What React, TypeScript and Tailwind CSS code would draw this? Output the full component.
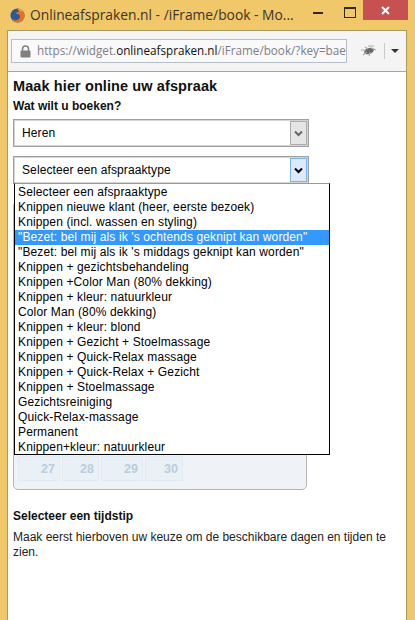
import React from "react";

const options = [
  "Selecteer een afspraaktype",
  "Knippen nieuwe klant (heer, eerste bezoek)",
  "Knippen (incl. wassen en styling)",
  "\"Bezet: bel mij als ik 's ochtends geknipt kan worden\"",
  "\"Bezet: bel mij als ik 's middags geknipt kan worden\"",
  "Knippen + gezichtsbehandeling",
  "Knippen +Color Man (80% dekking)",
  "Knippen + kleur: natuurkleur",
  "Color Man (80% dekking)",
  "Knippen + kleur: blond",
  "Knippen + Gezicht + Stoelmassage",
  "Knippen + Quick-Relax massage",
  "Knippen + Quick-Relax + Gezicht",
  "Knippen + Stoelmassage",
  "Gezichtsreiniging",
  "Quick-Relax-massage",
  "Permanent",
  "Knippen+kleur: natuurkleur",
];

const days = [
  { n: 27, w: "w-[42px]" },
  { n: 28, w: "w-[37px]" },
  { n: 29, w: "w-[42px]" },
  { n: 30, w: "w-[38px]" },
];

const Chevron = ({ color }: { color: string }) => (
  <svg width="9" height="7" viewBox="0 0 9 7">
    <path d="M1 1.500 L4.500 5 L8 1.500" fill="none" stroke={color} strokeWidth="2" />
  </svg>
);

const FakeSelect = ({ label, active }: { label: string; active?: boolean }) => (
  <div className="flex w-[296px] h-[28px] border border-[#a0a0a0] shadow-[inset_0_0_0_1px_#d4d4d4] bg-white p-px">
    <div className="flex-1 pl-[7px] text-[12px] tracking-[0.1px] leading-[24px] text-black">{label}</div>
    <div
      className={
        active
          ? "flex w-[17px] items-center justify-center border border-[#7eb4ea] bg-[#dcebfc]"
          : "flex w-[17px] items-center justify-center border border-[#acacac] bg-[#e5e5e5]"
      }
    >
      <Chevron color={active ? "#000000" : "#666666"} />
    </div>
  </div>
);

const App: React.FC = () => {
  return (
    <div className="w-[415px] h-[620px] overflow-hidden bg-[#f0c869] flex flex-col font-['Liberation_Sans',sans-serif]">
      {/* title bar */}
      <div className="flex h-[30px] shrink-0">
        <div className="flex items-center pl-[10px] gap-[5px] flex-1 pt-[1px]">
          <svg width="15" height="15" viewBox="0 0 16 16">
            <circle cx="8" cy="8" r="7.500" fill="#2b5a9c" />
            <path d="M8 .5A7.500 7.500 0 1 1 .9 10C2 12 4 13 6 13c3 0 5-2 4.600-4.600C10 6.500 8 6 6.500 6.500 6.800 5 8 4 9.500 3.800 9 2.500 8.500 1.500 8 .5Z" fill="#e8711c" />
            <path d="M8 .5c3 .3 5.500 2 6.700 4.500C13.500 3.500 12 3 10.500 3.200 9.800 2.300 9 1.300 8 .5Z" fill="#f6b12d" />
          </svg>
          <span className="font-['Open_Sans',sans-serif] text-[13.800px] text-[#3d3526] whitespace-nowrap">
            Onlineafspraken.nl - /iFrame/book - Mo...
          </span>
        </div>
        <div className="flex items-start">
          <div className="w-[10px] h-[2px] bg-[#2e2a1f] mt-[12px] mr-[21px]" />
          <div className="w-[10px] h-[8px] border border-t-2 border-[#2e2a1f] mt-[7px] mr-[7px] box-content" />
          <div className="w-[45px] h-[20px] bg-[#c75050] flex items-center justify-center mr-[7px]">
            <svg width="9" height="9" viewBox="0 0 9 9">
              <path d="M1 1 L8 8 M8 1 L1 8" stroke="#ffffff" strokeWidth="2" />
            </svg>
          </div>
        </div>
      </div>

      {/* window frame */}
      <div className="flex-1 ml-[7px] mr-[8px] border-x border-t border-[#a89a63] flex flex-col min-h-0">
        {/* url bar */}
        <div className="flex items-center h-[41px] shrink-0 bg-[#f4f4f4] border-b border-[#a6a6a6] pl-[3px]">
          <div className="flex items-center w-[336px] h-[24px] border border-[#b5bfcc] bg-[#f9f9f9] overflow-hidden pl-[8px]">
            <svg width="11" height="13" viewBox="0 0 11 13" className="shrink-0 mr-[6px]">
              <path d="M2.500 6V4a3 3 0 0 1 6 0v2" fill="none" stroke="#808080" strokeWidth="1.500" />
              <rect x="0.500" y="5.500" width="10" height="7" rx="1" fill="#808080" />
            </svg>
            <span className="font-['Open_Sans',sans-serif] text-[11.700px] text-[#7f7f86] whitespace-nowrap">
              https://widget.<span className="text-[#111111]">onlineafspraken.nl</span>/iFrame/book/?key=bae
            </span>
          </div>
          <svg width="17" height="14" viewBox="0 0 17 14" className="ml-[13px]">
            <ellipse cx="9" cy="7" rx="5" ry="3" fill="#666666" transform="rotate(-20 9 7)" />
            <path d="M1 6 L6 6 M3 11 L7 8 M9 12 L10 8 M8 2 L14 2 M11 4 L16 6 M5 3 L8 5" stroke="#aaaaaa" strokeWidth="1.200" />
          </svg>
          <div className="w-px h-[16px] bg-[#c9c9c9] ml-[7px]" />
          <div className="ml-[6px] w-0 h-0 border-x-[4px] border-x-transparent border-t-[4px] border-t-[#333333]" />
        </div>

        {/* page */}
        <div className="relative flex-1 bg-white pl-[5px] pr-[6px]">
          <h1 className="mt-[6px] text-[14.500px] tracking-[0.1px] leading-[16px] font-bold text-[#111111]">Maak hier online uw afspraak</h1>
          <div className="mt-[5px] text-[12px] leading-[14px] font-bold text-[#111111]">Wat wilt u boeken?</div>
          <div className="mt-[6px]">
            <FakeSelect label="Heren" />
          </div>
          <div className="mt-[9px]">
            <FakeSelect label="Selecteer een afspraaktype" active />
          </div>

          {/* calendar, mostly covered by the open list */}
          <div className="mt-[20px] w-[294px] h-[286px] flex flex-col justify-end rounded-b-[5px] border border-[#b5b5b5] bg-[#eff3f7] pl-[4px] pb-[8px]">
            <div className="flex gap-[2px]">
              {days.map((d) => (
                <div
                  key={d.n}
                  className={`${d.w} h-[25px] border border-[#e3ebf2] bg-[#e9f0f6] pr-[4px] text-right text-[12.500px] font-bold leading-[25px] text-[#b9cddf]`}
                >
                  {d.n}
                </div>
              ))}
            </div>
          </div>

          <div className="mt-[19px] text-[12px] leading-[14px] font-bold text-[#111111]">Selecteer een tijdstip</div>
          <p className="mt-[7px] text-[12px] leading-[15px] text-[#222222]">
            Maak eerst hierboven uw keuze om de beschikbare dagen en tijden te zien.
          </p>

          {/* open dropdown list */}
          <div className="absolute left-[6px] top-[111px] w-[316px] h-[272px] overflow-hidden border border-black border-t-[#999999] bg-white pt-px text-[12px] tracking-[0.13px] leading-[15px] text-black">
            {options.map((o, i) => (
              <div key={o} className={i === 3 ? "pl-[3px] bg-[#3399ff] text-white whitespace-nowrap" : "pl-[3px] whitespace-nowrap"}>
                {o}
              </div>
            ))}
          </div>
        </div>
      </div>
    </div>
  );
};

export default App;
